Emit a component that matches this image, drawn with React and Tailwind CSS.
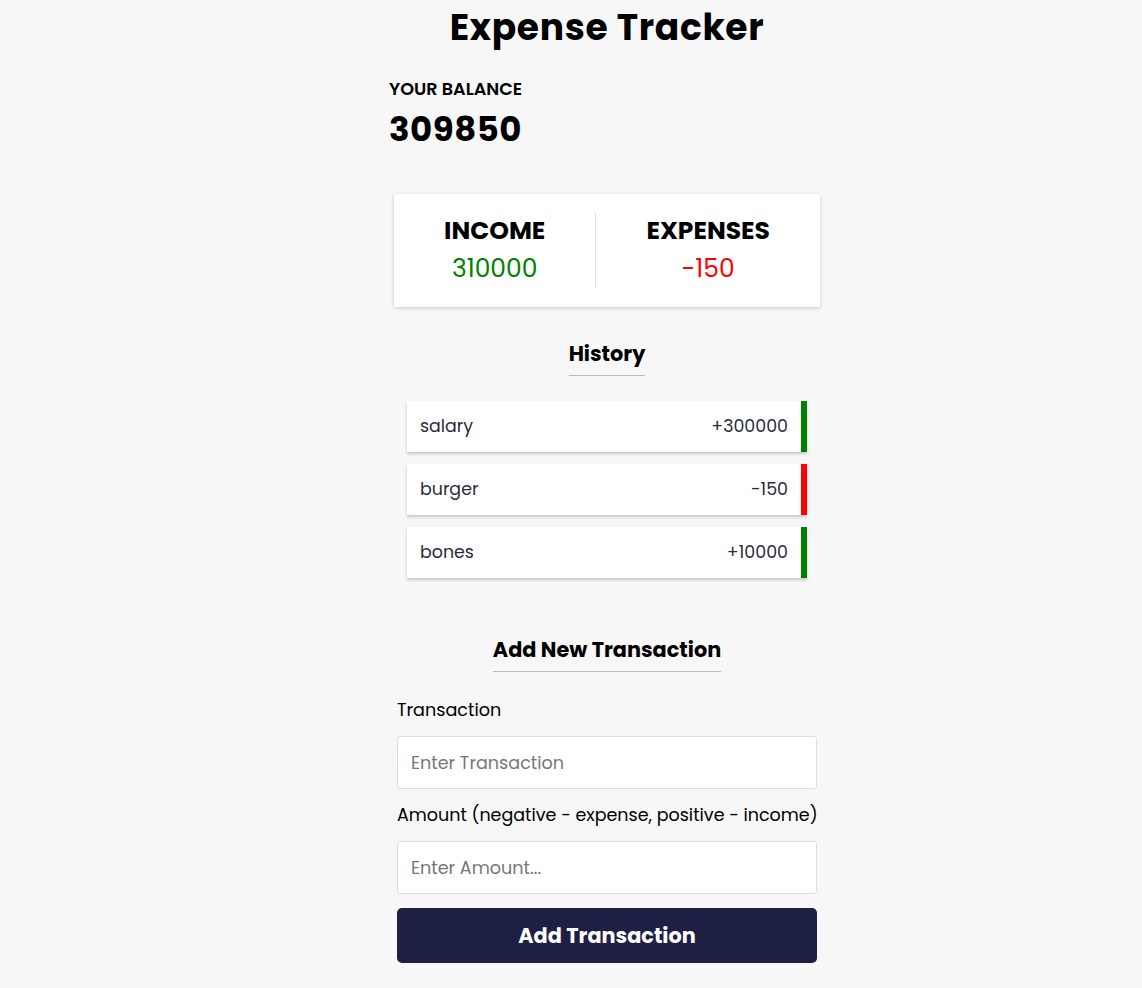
const transactions = [
  { id: 1, text: 'salary', amount: 300000 },
  { id: 2, text: 'burger', amount: -150 },
  { id: 3, text: 'bones', amount: 10000 },
];

const App = () => {
  const total = transactions.reduce((acc, t) => acc + t.amount, 0);
  const income = transactions.filter((t) => t.amount > 0).reduce((acc, t) => acc + t.amount, 0);
  const expense = transactions.filter((t) => t.amount < 0).reduce((acc, t) => acc + t.amount, 0);

  return (
    <div className="min-h-[988px] bg-[#f7f7f7] text-black font-['Poppins','Inter','Noto_Sans',sans-serif]">
      <div className="flex justify-center pl-[72px]">
        <div className="w-[436px] pb-6">
          <h1 className="text-center text-[36px] font-bold tracking-[0.7px] leading-[52px] pt-[2px]">Expense Tracker</h1>

          <div className="mt-[23px]">
            <h4 className="text-[17.6px] font-semibold uppercase leading-6">Your Balance</h4>
            <h2 className="text-[34px] font-bold leading-[44px] mt-[6px] tracking-[0.5px]">{total}</h2>
          </div>

          <div className="mx-[5px] mt-[43px] flex h-[113px] items-center bg-white pb-[1px] shadow-[0_1px_4px_rgba(0,0,0,0.2)]">
            <div className="flex-auto text-center">
              <h4 className="text-[25px] font-bold uppercase leading-[36px]">Income</h4>
              <p className="mt-[2px] text-[25px] leading-[36px] text-[#008000]">{income}</p>
            </div>
            <div className="h-[75px] w-px bg-[#dedede]" />
            <div className="flex-auto text-center">
              <h4 className="text-[25px] font-bold uppercase leading-[36px]">Expenses</h4>
              <p className="mt-[2px] text-[25px] leading-[36px] text-[#ff0000]">{expense}</p>
            </div>
          </div>

          <div className="mt-[33px] flex justify-center">
            <h3 className="border-b border-[#bbb] pb-[7px] text-[20.8px] font-bold leading-7">History</h3>
          </div>

          <ul className="mx-[18px] mt-[25px] flex flex-col gap-3">
            {transactions.map((t) => (
              <li
                key={t.id}
                className={`flex h-[51px] items-center justify-between border-r-[6px] bg-white pl-[13px] pr-[13px] text-[17.4px] text-[#2c2c3a] shadow-[0_2px_3px_rgba(0,0,0,0.2)] ${
                  t.amount < 0 ? 'border-[#ff0000]' : 'border-[#008000]'
                }`}
              >
                <span>{t.text}</span>
                <span>{t.amount < 0 ? '-' : '+'}{Math.abs(t.amount)}</span>
              </li>
            ))}
          </ul>

          <div className="mt-[58px] flex justify-center">
            <h3 className="border-b border-[#bbb] pb-[7px] text-[20.8px] font-bold leading-7">Add New Transaction</h3>
          </div>

          <form className="mx-2 mt-[26px]" onSubmit={(e) => e.preventDefault()}>
            <div>
              <label htmlFor="text" className="block text-[17.6px] leading-6">Transaction</label>
              <input
                type="text"
                id="text"
                placeholder="Enter Transaction"
                className="mt-[14px] block h-[53px] w-full rounded-[3px] border border-[#dedede] bg-white px-[13px] text-[17.6px] placeholder:text-[#777]"
              />
            </div>
            <div className="mt-[14px]">
              <label htmlFor="amount" className="block whitespace-nowrap text-[17.5px] leading-6">
                Amount (negative - expense, positive - income)
              </label>
              <input
                type="number"
                id="amount"
                placeholder="Enter Amount..."
                className="mt-[14px] block h-[53px] w-full rounded-[3px] border border-[#dedede] bg-white px-[13px] text-[17.6px] placeholder:text-[#777]"
              />
            </div>
            <button
              type="submit"
              className="mt-[14px] block h-[55px] w-full rounded-[5px] bg-[#1e1f45] text-[20.8px] font-bold text-white"
            >
              Add Transaction
            </button>
          </form>
        </div>
      </div>
    </div>
  );
};

export default App;
